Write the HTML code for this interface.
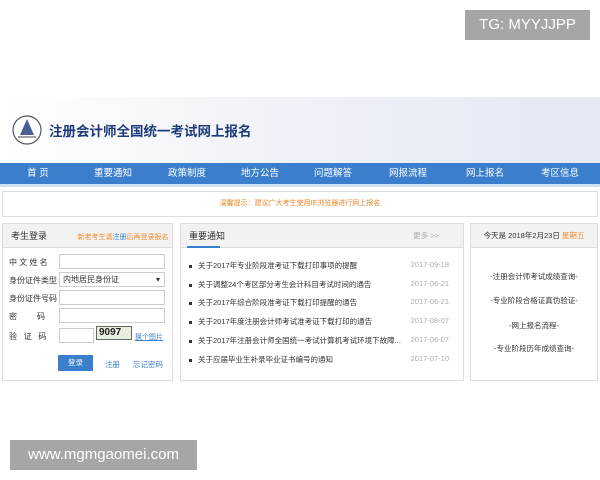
<!DOCTYPE html>
<html><head><meta charset="utf-8"><style>
*{margin:0;padding:0;box-sizing:border-box}
body{width:600px;height:480px;background:#fff;position:relative;overflow:hidden;font-family:"Liberation Sans","Noto Sans CJK SC",sans-serif;color:#333}
.abs{position:absolute}
.wm{background:#a6a6a6;color:#fff;font-size:15px;line-height:30px;text-align:center}
.hdr{left:0;top:97px;width:600px;height:66px;background:linear-gradient(90deg,#fff 0%,#eef1f7 50%,#e4e9f2 100%)}
.nav{left:0;top:163px;width:600px;height:24px;background:#3b7fcc;border-bottom:3px solid #cfe0f2}
.nav span{position:absolute;top:0;line-height:22px;color:#fff;font-size:9.5px;width:76px;text-align:center}
.box{border:1px solid #ddd;background:#fff}
.ph{height:24px;background:#f2f2f2;border-bottom:1px solid #ddd;font-size:9px;line-height:24px;padding-left:8px}
.row{position:absolute;left:6px;font-size:8px;color:#333}
.inp{position:absolute;left:56px;width:106px;height:15px;border:1px solid #ccc;background:#fff;font-size:8px;line-height:13px;padding-left:3px}
.li{position:absolute;left:8px;font-size:7.5px;color:#333}
.li b{display:inline-block;width:3px;height:3px;background:#333;margin-right:6px;vertical-align:middle}
.dt{position:absolute;right:14px;font-size:7.5px;color:#aaa}
.rl{position:absolute;width:100%;text-align:center;font-size:7.5px;color:#333}
</style></head><body>
<div class="abs wm" style="left:465px;top:10px;width:125px;height:30px">TG: MYYJJPP</div>
<div class="abs hdr"></div>
<svg class="abs" style="left:11px;top:113px" width="32" height="34" viewBox="0 0 32 34"><circle cx="16" cy="17" r="14" fill="#fff" stroke="#556" stroke-width="1.2"/><path d="M16 6 L9 22 H23 Z" fill="#4a5f99"/><path d="M7 24 H25" stroke="#445" stroke-width="1"/></svg>
<div class="abs" style="left:49px;top:120px;font-size:13.5px;font-weight:bold;color:#1d3b7a">注册会计师全国统一考试网上报名</div>
<div class="abs nav">
<span style="left:0">首 页</span><span style="left:75px">重要通知</span><span style="left:149px">政策制度</span><span style="left:222px">地方公告</span><span style="left:295px">问题解答</span><span style="left:370px">网报流程</span><span style="left:447px">网上报名</span><span style="left:522px">考区信息</span>
</div>
<div class="abs box" style="left:2px;top:191px;width:596px;height:26px;text-align:center;font-size:7px;line-height:24px;color:#e8862a">温馨提示：建议广大考生使用IE浏览器进行网上报名</div>

<div class="abs box" style="left:2px;top:223px;width:171px;height:158px">
<div class="ph">考生登录 <span style="margin-left:28px;color:#f08a2c;font-size:7px">新老考生请<span style="color:#3a7fcc">注册</span>后再登录报名</span></div>
<div class="row" style="top:33px">中 文 姓 名</div><div class="inp" style="top:30px"></div>
<div class="row" style="top:51px">身份证件类型</div><div class="inp" style="top:48px">内地居民身份证<span style="float:right;margin-right:4px">▾</span></div>
<div class="row" style="top:69px">身份证件号码</div><div class="inp" style="top:66px"></div>
<div class="row" style="top:87px">密&nbsp;&nbsp;&nbsp;&nbsp;&nbsp;&nbsp;&nbsp;&nbsp;&nbsp;码</div><div class="inp" style="top:84px"></div>
<div class="row" style="top:107px">验&nbsp;&nbsp;&nbsp;证&nbsp;&nbsp;&nbsp;码</div><div class="inp" style="top:104px;width:35px"></div>
<div class="abs" style="left:93px;top:102px;width:36px;height:14px;border:1px solid #666;background:#e8efe0;font-size:10px;font-weight:bold;line-height:12px;padding-left:2px;color:#222">9097</div>
<div class="abs" style="left:132px;top:108px;font-size:7px;color:#3a7fcc;text-decoration:underline">换个图片</div>
<div class="abs" style="left:55px;top:131px;width:35px;height:16px;background:#3a7fcc;color:#fff;font-size:7.5px;line-height:16px;text-align:center">登录</div>
<div class="abs" style="left:102px;top:135px;font-size:7.5px;color:#3a7fcc">注册</div>
<div class="abs" style="left:130px;top:135px;font-size:7.5px;color:#3a7fcc">忘记密码</div>
</div>

<div class="abs box" style="left:180px;top:223px;width:284px;height:158px">
<div class="ph" style="position:relative">重要通知<div style="position:absolute;left:6px;bottom:-1px;width:33px;height:2px;background:#3a7fcc"></div><span style="position:absolute;right:24px;color:#aaa;font-size:7.5px">更多 &gt;&gt;</span></div>
<div class="li" style="top:36px"><b></b>关于2017年专业阶段准考证下载打印事项的提醒</div><div class="dt" style="top:36px">2017-09-18</div>
<div class="li" style="top:55px"><b></b>关于调整24个考区部分考生会计科目考试时间的通告</div><div class="dt" style="top:55px">2017-06-21</div>
<div class="li" style="top:73px"><b></b>关于2017年综合阶段准考证下载打印提醒的通告</div><div class="dt" style="top:73px">2017-06-21</div>
<div class="li" style="top:92px"><b></b>关于2017年度注册会计师考试准考证下载打印的通告</div><div class="dt" style="top:92px">2017-08-07</div>
<div class="li" style="top:111px"><b></b>关于2017年注册会计师全国统一考试计算机考试环境下故障...</div><div class="dt" style="top:111px">2017-06-07</div>
<div class="li" style="top:130px"><b></b>关于应届毕业生补录毕业证书编号的通知</div><div class="dt" style="top:130px">2017-07-10</div>
</div>

<div class="abs box" style="left:470px;top:223px;width:128px;height:158px">
<div class="ph" style="padding:0;text-align:center;font-size:7.5px">今天是 2018年2月23日 <span style="color:#f08a2c">星期五</span></div>
<div class="rl" style="top:47px">-注册会计师考试成绩查询-</div>
<div class="rl" style="top:71px">-专业阶段合格证真伪验证-</div>
<div class="rl" style="top:96px">-网上报名流程-</div>
<div class="rl" style="top:119px">-专业阶段历年成绩查询-</div>
</div>

<div class="abs wm" style="left:10px;top:440px;width:187px;height:30px">www.mgmgaomei.com</div>
</body></html>
